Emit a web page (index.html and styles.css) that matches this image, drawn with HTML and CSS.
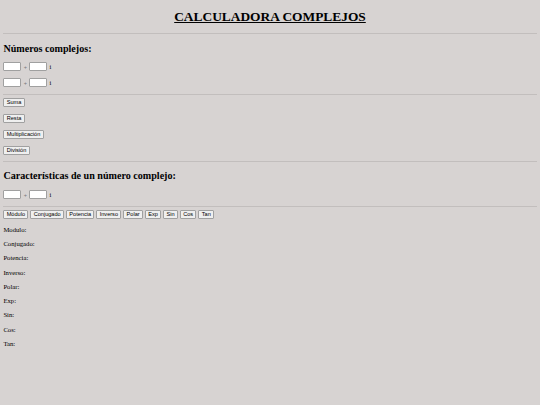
FILE: index.html
```html
<!DOCTYPE html>
<html lang="es">
<head>
<meta charset="utf-8">
<title>Calculadora complejos</title>
<link rel="stylesheet" href="styles.css">
</head>
<body>
<h1 class="title">CALCULADORA COMPLEJOS</h1>
<hr class="rule">
<h2 class="section">Números complejos:</h2>
<div class="row"><input class="num" type="text"><span class="plus">+</span><input class="num" type="text"><span class="imag">i</span></div>
<div class="row"><input class="num" type="text"><span class="plus">+</span><input class="num" type="text"><span class="imag">i</span></div>
<hr class="rule">
<div class="ops">
  <div><button class="btn">Suma</button></div>
  <div><button class="btn">Resta</button></div>
  <div><button class="btn">Multiplicación</button></div>
  <div><button class="btn">División</button></div>
</div>
<hr class="rule">
<h2 class="section">Características de un número complejo:</h2>
<div class="row"><input class="num" type="text"><span class="plus">+</span><input class="num" type="text"><span class="imag">i</span></div>
<hr class="rule">
<div class="toolbar">
  <button class="btn">Módulo</button>
  <button class="btn">Conjugado</button>
  <button class="btn">Potencia</button>
  <button class="btn">Inverso</button>
  <button class="btn">Polar</button>
  <button class="btn">Exp</button>
  <button class="btn">Sin</button>
  <button class="btn">Cos</button>
  <button class="btn">Tan</button>
</div>
<p class="result">Modulo:</p>
<p class="result">Conjugado:</p>
<p class="result">Potencia:</p>
<p class="result">Inverso:</p>
<p class="result">Polar:</p>
<p class="result">Exp:</p>
<p class="result">Sin:</p>
<p class="result">Cos:</p>
<p class="result">Tan:</p>
</body>
</html>
```
FILE: styles.css
```css
html {
  background: #d7d3d2;
}
body {
  margin: 0 3.4px;
  padding-top: 0.1px;
  font-family: "Liberation Serif", "Times New Roman", serif;
  color: #000;
  background: #d7d3d2;
}
.title {
  font-size: 13.4px;
  line-height: 15.5px;
  font-weight: bold;
  text-align: center;
  text-decoration: underline;
  margin: 9px 0 8.5px;
}
.rule {
  border: 0;
  border-top: 1px solid #c2bebd;
  height: 0;
  margin: 3.4px 0;
}
.section {
  font-size: 10.1px;
  line-height: 11.5px;
  font-weight: bold;
  margin: 8.5px 0 8.3px;
}
.row {
  display: flex;
  align-items: center;
  height: 9px;
  margin: 6.8px 0;
}
.num {
  box-sizing: border-box;
  width: 18px;
  height: 9px;
  margin: 0;
  padding: 0 1px;
  border: 1px solid #a0a0a0;
  border-radius: 1px;
  background: #fff;
  font-size: 5.6px;
}
.plus {
  width: 8px;
  text-align: center;
  font-family: "Liberation Sans", Arial, sans-serif;
  font-size: 5.6px;
  color: #777;
}
.imag {
  margin-left: 2px;
  font-size: 6.6px;
  color: #000;
}
.ops {
  display: flex;
  flex-direction: column;
  gap: 6.8px;
  margin: 3.4px 0 6px;
}
.ops div {
  display: flex;
  height: 9px;
}
.toolbar {
  display: flex;
  gap: 2px;
  margin: 3.4px 0 6.6px;
  height: 9px;
}
.btn {
  box-sizing: border-box;
  height: 9px;
  margin: 0;
  padding: 0 2.3px;
  border: 1px solid #a0a0a0;
  border-radius: 1px;
  background: #efefef;
  color: #000;
  font-family: "Liberation Sans", Arial, sans-serif;
  font-size: 5.6px;
  line-height: 7px;
}
.result {
  font-size: 6.7px;
  line-height: 7.65px;
  margin: 6.6px 0;
  color: #000;
}
```
